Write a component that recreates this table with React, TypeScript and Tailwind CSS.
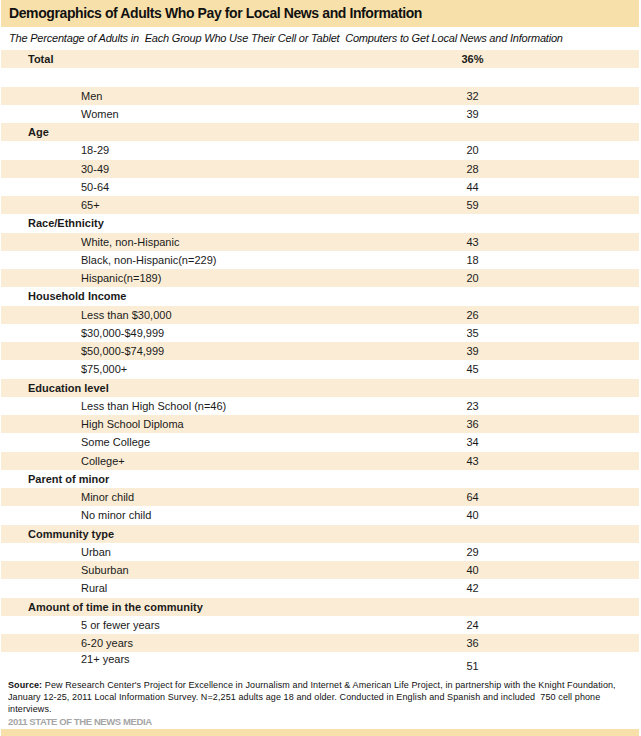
type Row = { label: string; value?: string; header?: boolean };

const rows: Row[] = [
  { label: "Total", value: "36%", header: true },
  { label: "" },
  { label: "Men", value: "32" },
  { label: "Women", value: "39" },
  { label: "Age", header: true },
  { label: "18-29", value: "20" },
  { label: "30-49", value: "28" },
  { label: "50-64", value: "44" },
  { label: "65+", value: "59" },
  { label: "Race/Ethnicity", header: true },
  { label: "White, non-Hispanic", value: "43" },
  { label: "Black, non-Hispanic(n=229)", value: "18" },
  { label: "Hispanic(n=189)", value: "20" },
  { label: "Household Income", header: true },
  { label: "Less than $30,000", value: "26" },
  { label: "$30,000-$49,999", value: "35" },
  { label: "$50,000-$74,999", value: "39" },
  { label: "$75,000+", value: "45" },
  { label: "Education level", header: true },
  { label: "Less than High School (n=46)", value: "23" },
  { label: "High School Diploma", value: "36" },
  { label: "Some College", value: "34" },
  { label: "College+", value: "43" },
  { label: "Parent of minor", header: true },
  { label: "Minor child", value: "64" },
  { label: "No minor child", value: "40" },
  { label: "Community type", header: true },
  { label: "Urban", value: "29" },
  { label: "Suburban", value: "40" },
  { label: "Rural", value: "42" },
  { label: "Amount of time in the community", header: true },
  { label: "5 or fewer years", value: "24" },
  { label: "6-20 years", value: "36" },
];

export default function App() {
  return (
    <div className="w-[641px] h-[736px] bg-white font-['Liberation_Sans',Arial,sans-serif] text-[#1a1a1a] overflow-hidden">
      {/* title band */}
      <div className="ml-[1px] w-[638px] h-[27px] bg-[#f8e0aa] flex items-center pl-[8px]">
        <h1 className="text-[14px] font-bold tracking-[-0.4px] text-[#111]">
          Demographics of Adults Who Pay for Local News and Information
        </h1>
      </div>

      {/* subtitle */}
      <div className="ml-[1px] w-[638px] h-[23px] flex items-center pl-[8px]">
        <p className="text-[11px] italic tracking-[-0.2px] whitespace-pre text-[#111]">
          {"The Percentage of Adults in  Each Group Who Use Their Cell or Tablet  Computers to Get Local News and Information"}
        </p>
      </div>

      {/* table */}
      <div className="ml-[1px] w-[638px]">
        {rows.map((r, i) => (
          <div
            key={i}
            className={`flex h-[18.25px] items-center text-[11px] leading-[18.25px] ${
              i % 2 === 0 ? "bg-[#fbedd5]" : "bg-white"
            }`}
          >
            <div className={`w-[441px] ${r.header ? "pl-[27px] font-bold" : "pl-[80px]"}`}>
              {r.label}
            </div>
            <div className={`w-[61px] text-center ${r.header ? "font-bold" : ""}`}>{r.value}</div>
          </div>
        ))}
        {/* last row: value sits lower than its label */}
        <div className="flex h-[26.75px] items-start text-[11px] leading-[14px] bg-white">
          <div className="w-[441px] pl-[80px]">21+ years</div>
          <div className="w-[61px] text-center mt-[7px]">51</div>
        </div>
      </div>

      {/* source */}
      <div className="pl-[8px] text-[9px] leading-[12px] tracking-[0.1px] text-[#111] whitespace-pre">
        <p>
          <span className="font-bold">Source:</span>
          {" Pew Research Center's Project for Excellence in Journalism and Internet & American Life Project, in partnership with the Knight Foundation,"}
        </p>
        <p>{"January 12-25, 2011 Local Information Survey. N=2,251 adults age 18 and older. Conducted in English and Spanish and included  750 cell phone"}</p>
        <p>interviews.</p>
      </div>
      <div className="pl-[8px] h-[14px] flex items-center text-[9.5px] font-bold tracking-[-0.4px] text-[#a6a6a6]">
        2011 STATE OF THE NEWS MEDIA
      </div>
      <div className="ml-[1px] w-[638px] h-[7px] bg-[#f8e0aa]" />
    </div>
  );
}
